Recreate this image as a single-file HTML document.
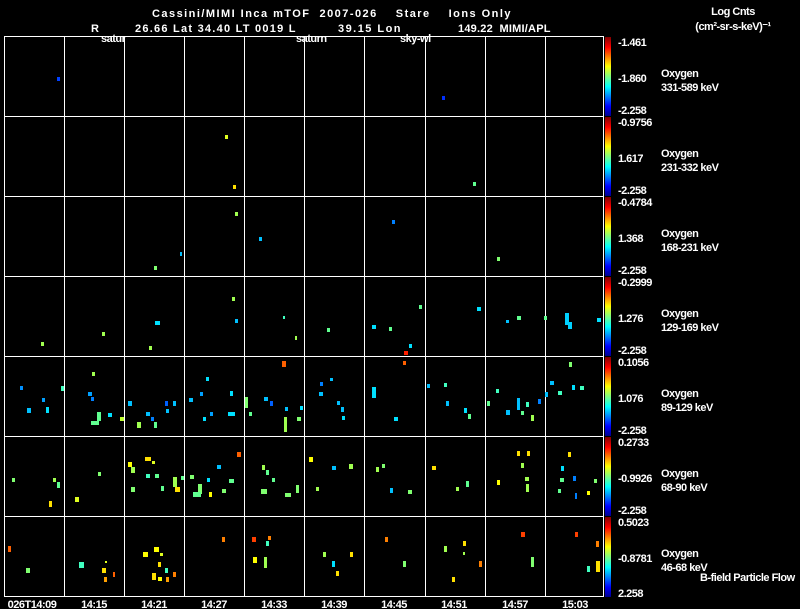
<!DOCTYPE html>
<html><head><meta charset="utf-8"><style>
body{margin:0;background:#000;width:800px;height:609px;overflow:hidden}
svg{display:block}
text{font-family:"Liberation Sans",sans-serif;fill:#fff;font-size:11px;font-weight:bold;letter-spacing:-0.5px;white-space:pre}
</style></head><body>
<svg width="800" height="609" viewBox="0 0 800 609">
<defs>
<linearGradient id="jet" x1="0" y1="1" x2="0" y2="0">
<stop offset="0" stop-color="#00008f"/><stop offset="0.12" stop-color="#0000ff"/><stop offset="0.37" stop-color="#00ffff"/><stop offset="0.5" stop-color="#80ff80"/><stop offset="0.63" stop-color="#ffff00"/><stop offset="0.87" stop-color="#ff0000"/><stop offset="1" stop-color="#800000"/>
</linearGradient>
</defs>
<text x="152" y="17" font-size="13.5" xml:space="preserve" textLength="358" lengthAdjust="spacing">Cassini/MIMI Inca mTOF  2007-026    Stare    Ions Only</text>
<text x="91" y="32" font-size="13.5">R</text>
<text x="135" y="32" font-size="13.5" textLength="160" lengthAdjust="spacing">26.66 Lat 34.40 LT 0019 L</text>
<text x="338" y="32" font-size="13.5" textLength="62" lengthAdjust="spacing">39.15 Lon</text>
<text x="458" y="32" font-size="13.5" xml:space="preserve" textLength="92" lengthAdjust="spacing">149.22  MIMI/APL</text>
<text x="101" y="42" font-size="12.5">satur</text>
<text x="296" y="42" font-size="12.5">saturn</text>
<text x="400" y="42" font-size="12.5">sky-wl</text>
<text x="733" y="15" text-anchor="middle">Log Cnts</text>
<text x="733" y="30" text-anchor="middle">(cm²-sr-s-keV)⁻¹</text>
<g fill="none" stroke="#fff" stroke-width="1">
<rect x="4.5" y="36.5" width="599" height="560"/>
<path d="M4 116.5H604M4 196.5H604M4 276.5H604M4 356.5H604M4 436.5H604M4 516.5H604"/>
<path d="M64.5 36V597M124.5 36V597M184.5 36V597M244.5 36V597M304.5 36V597M364.5 36V597M425.5 36V597M485.5 36V597M545.5 36V597"/>
</g>
<g fill="url(#jet)">
<rect x="605" y="37" width="6" height="79"/><rect x="605" y="117" width="6" height="79"/><rect x="605" y="197" width="6" height="79"/><rect x="605" y="277" width="6" height="79"/><rect x="605" y="357" width="6" height="79"/><rect x="605" y="437" width="6" height="79"/><rect x="605" y="517" width="6" height="80"/>
</g>
<g font-size="11">
<text x="618" y="46">-1.461</text><text x="618" y="82">-1.860</text><text x="618" y="114">-2.258</text>
<text x="618" y="126">-0.9756</text><text x="618" y="162">1.617</text><text x="618" y="194">-2.258</text>
<text x="618" y="206">-0.4784</text><text x="618" y="242">1.368</text><text x="618" y="274">-2.258</text>
<text x="618" y="286">-0.2999</text><text x="618" y="322">1.276</text><text x="618" y="354">-2.258</text>
<text x="618" y="366">0.1056</text><text x="618" y="402">1.076</text><text x="618" y="434">-2.258</text>
<text x="618" y="446">0.2733</text><text x="618" y="482">-0.9926</text><text x="618" y="514">-2.258</text>
<text x="618" y="526">0.5023</text><text x="618" y="562">-0.8781</text><text x="618" y="597">2.258</text>
<text x="661" y="77">Oxygen</text><text x="661" y="91">331-589 keV</text>
<text x="661" y="157">Oxygen</text><text x="661" y="171">231-332 keV</text>
<text x="661" y="237">Oxygen</text><text x="661" y="251">168-231 keV</text>
<text x="661" y="317">Oxygen</text><text x="661" y="331">129-169 keV</text>
<text x="661" y="397">Oxygen</text><text x="661" y="411">89-129 keV</text>
<text x="661" y="477">Oxygen</text><text x="661" y="491">68-90 keV</text>
<text x="661" y="557">Oxygen</text><text x="661" y="571">46-68 keV</text>
<text x="700" y="581" font-size="10">B-field Particle Flow</text>
</g>
<g font-size="11" text-anchor="middle">
<text x="32" y="608">026T14:09</text><text x="94" y="608">14:15</text><text x="154" y="608">14:21</text><text x="214" y="608">14:27</text><text x="274" y="608">14:33</text><text x="334" y="608">14:39</text><text x="394" y="608">14:45</text><text x="454" y="608">14:51</text><text x="515" y="608">14:57</text><text x="575" y="608">15:03</text>
</g>
<g>
<rect x="57" y="77" width="3" height="4" fill="#0040ff"/><rect x="442" y="96" width="3" height="4" fill="#0030ff"/>
<rect x="225" y="135" width="3" height="4" fill="#e0ff20"/><rect x="233" y="185" width="3" height="4" fill="#ffe000"/><rect x="473" y="182" width="3" height="4" fill="#60ff90"/>
<rect x="154" y="266" width="3" height="4" fill="#80ff70"/><rect x="259" y="237" width="3" height="4" fill="#00c0ff"/><rect x="235" y="212" width="3" height="4" fill="#a0ff50"/><rect x="392" y="220" width="3" height="4" fill="#0080ff"/><rect x="497" y="257" width="3" height="4" fill="#80ff70"/><rect x="180" y="252" width="2" height="4" fill="#00c0ff"/>
<rect x="41" y="342" width="3" height="4" fill="#a0ff50"/><rect x="102" y="332" width="3" height="4" fill="#a0ff50"/><rect x="149" y="346" width="3" height="4" fill="#a0ff50"/><rect x="155" y="321" width="5" height="4" fill="#00e0ff"/><rect x="232" y="297" width="3" height="4" fill="#a0ff50"/><rect x="235" y="319" width="3" height="4" fill="#00c0ff"/><rect x="283" y="316" width="2" height="3" fill="#40ffc0"/><rect x="295" y="336" width="2" height="4" fill="#a0ff50"/><rect x="327" y="328" width="3" height="4" fill="#60ff90"/><rect x="372" y="325" width="4" height="4" fill="#00e0ff"/><rect x="409" y="344" width="3" height="4" fill="#00e0ff"/><rect x="404" y="351" width="4" height="4" fill="#ff2000"/><rect x="389" y="327" width="3" height="4" fill="#60ff90"/><rect x="419" y="305" width="3" height="4" fill="#60ff90"/><rect x="477" y="307" width="4" height="4" fill="#00e0ff"/><rect x="517" y="316" width="4" height="4" fill="#60ff90"/><rect x="565" y="313" width="4" height="12" fill="#00d0ff"/><rect x="568" y="322" width="4" height="7" fill="#00d0ff"/><rect x="597" y="318" width="4" height="4" fill="#00e0ff"/><rect x="544" y="316" width="3" height="4" fill="#60ff90"/><rect x="506" y="320" width="3" height="3" fill="#00c0ff"/>
</g>
<g>
<rect x="20" y="386" width="3" height="4" fill="#0090ff"/><rect x="27" y="408" width="4" height="5" fill="#00c0ff"/><rect x="42" y="398" width="3" height="4" fill="#00a0ff"/><rect x="46" y="407" width="3" height="6" fill="#00e0ff"/><rect x="61" y="386" width="3" height="5" fill="#40ffc0"/>
<rect x="92" y="372" width="3" height="4" fill="#a0ff50"/><rect x="88" y="392" width="4" height="4" fill="#00a0ff"/><rect x="91" y="397" width="3" height="4" fill="#0080ff"/><rect x="97" y="412" width="4" height="9" fill="#60ff90"/><rect x="91" y="421" width="8" height="4" fill="#60ff90"/><rect x="108" y="413" width="4" height="4" fill="#00e0ff"/><rect x="120" y="417" width="4" height="4" fill="#c0ff30"/>
<rect x="128" y="401" width="4" height="5" fill="#00c0ff"/><rect x="146" y="412" width="4" height="4" fill="#00c0ff"/><rect x="151" y="417" width="3" height="4" fill="#0080ff"/><rect x="137" y="422" width="4" height="6" fill="#a0ff50"/><rect x="154" y="422" width="3" height="6" fill="#60ff90"/><rect x="165" y="401" width="3" height="5" fill="#0060ff"/><rect x="173" y="401" width="3" height="5" fill="#00c0ff"/><rect x="166" y="409" width="3" height="4" fill="#00c0ff"/>
<rect x="189" y="398" width="4" height="4" fill="#00c0ff"/><rect x="206" y="377" width="3" height="4" fill="#00e0ff"/><rect x="200" y="392" width="3" height="4" fill="#00a0ff"/><rect x="210" y="412" width="3" height="4" fill="#00a0ff"/><rect x="203" y="417" width="3" height="4" fill="#00e0ff"/><rect x="230" y="391" width="3" height="5" fill="#00e0ff"/><rect x="228" y="412" width="7" height="4" fill="#00e0ff"/>
<rect x="245" y="397" width="3" height="11" fill="#80ff70"/><rect x="249" y="412" width="3" height="4" fill="#60ff90"/><rect x="264" y="397" width="4" height="4" fill="#00c0ff"/><rect x="270" y="401" width="3" height="5" fill="#0060ff"/><rect x="285" y="407" width="3" height="4" fill="#00c0ff"/><rect x="284" y="417" width="3" height="15" fill="#a0ff50"/><rect x="297" y="417" width="4" height="4" fill="#80ff70"/><rect x="300" y="406" width="3" height="4" fill="#00e0ff"/><rect x="282" y="361" width="4" height="6" fill="#ff6000"/>
<rect x="320" y="382" width="3" height="4" fill="#0080ff"/><rect x="319" y="392" width="4" height="4" fill="#00c0ff"/><rect x="337" y="401" width="3" height="4" fill="#00c0ff"/><rect x="341" y="407" width="3" height="5" fill="#00c0ff"/><rect x="342" y="416" width="3" height="4" fill="#00e0ff"/><rect x="330" y="378" width="3" height="3" fill="#00c0ff"/>
<rect x="372" y="387" width="4" height="11" fill="#00e0ff"/><rect x="394" y="417" width="4" height="4" fill="#00e0ff"/><rect x="403" y="361" width="3" height="4" fill="#ff6000"/>
<rect x="427" y="384" width="3" height="4" fill="#00c0ff"/><rect x="444" y="383" width="3" height="4" fill="#40ffc0"/><rect x="446" y="401" width="3" height="5" fill="#00c0ff"/><rect x="464" y="408" width="3" height="5" fill="#00e0ff"/><rect x="468" y="414" width="3" height="5" fill="#60ff90"/>
<rect x="487" y="401" width="3" height="5" fill="#60ff90"/><rect x="496" y="389" width="3" height="4" fill="#40ffc0"/><rect x="506" y="410" width="4" height="5" fill="#00c0ff"/><rect x="517" y="398" width="3" height="12" fill="#00c0ff"/><rect x="521" y="411" width="3" height="4" fill="#60ff90"/><rect x="526" y="402" width="3" height="5" fill="#40ffc0"/><rect x="531" y="415" width="3" height="6" fill="#a0ff50"/><rect x="538" y="399" width="3" height="5" fill="#0080ff"/>
<rect x="545" y="392" width="3" height="5" fill="#00c0ff"/><rect x="550" y="381" width="4" height="4" fill="#00c0ff"/><rect x="558" y="391" width="4" height="4" fill="#40ffc0"/><rect x="569" y="362" width="3" height="5" fill="#80ff70"/><rect x="572" y="385" width="3" height="5" fill="#00e0ff"/><rect x="580" y="386" width="4" height="4" fill="#40ffc0"/>
</g>
<g>
<rect x="12" y="478" width="3" height="4" fill="#80ff70"/><rect x="53" y="478" width="3" height="4" fill="#a0ff50"/><rect x="57" y="482" width="3" height="6" fill="#60ff90"/><rect x="49" y="501" width="3" height="6" fill="#ffe000"/>
<rect x="98" y="472" width="3" height="4" fill="#80ff70"/><rect x="75" y="497" width="4" height="5" fill="#e0ff20"/>
<rect x="128" y="462" width="4" height="5" fill="#ffff00"/><rect x="131" y="467" width="4" height="6" fill="#a0ff50"/><rect x="145" y="457" width="6" height="4" fill="#ffe000"/><rect x="146" y="474" width="4" height="4" fill="#40ffc0"/><rect x="155" y="474" width="4" height="4" fill="#60ff90"/><rect x="131" y="487" width="4" height="5" fill="#80ff70"/><rect x="161" y="486" width="3" height="5" fill="#60ff90"/><rect x="173" y="477" width="4" height="10" fill="#a0ff50"/><rect x="175" y="487" width="5" height="5" fill="#ffe000"/><rect x="152" y="461" width="3" height="3" fill="#e0ff20"/><rect x="181" y="476" width="3" height="4" fill="#60ff90"/>
<rect x="190" y="475" width="4" height="4" fill="#80ff70"/><rect x="198" y="484" width="4" height="10" fill="#80ff70"/><rect x="193" y="492" width="8" height="5" fill="#60ff90"/><rect x="207" y="478" width="3" height="4" fill="#00e0ff"/><rect x="209" y="492" width="3" height="5" fill="#ffff00"/><rect x="217" y="465" width="4" height="4" fill="#00c0ff"/><rect x="222" y="489" width="4" height="4" fill="#80ff70"/><rect x="237" y="452" width="4" height="5" fill="#ff6000"/><rect x="229" y="479" width="5" height="4" fill="#60ff90"/>
<rect x="262" y="465" width="3" height="5" fill="#a0ff50"/><rect x="266" y="470" width="3" height="5" fill="#60ff90"/><rect x="272" y="478" width="3" height="4" fill="#60ff90"/><rect x="261" y="489" width="6" height="5" fill="#80ff70"/><rect x="285" y="493" width="6" height="4" fill="#80ff70"/><rect x="296" y="485" width="3" height="8" fill="#80ff70"/>
<rect x="309" y="457" width="4" height="5" fill="#ffff00"/><rect x="332" y="466" width="4" height="4" fill="#00c0ff"/><rect x="349" y="464" width="4" height="5" fill="#a0ff50"/><rect x="316" y="487" width="3" height="4" fill="#a0ff50"/>
<rect x="376" y="467" width="3" height="5" fill="#a0ff50"/><rect x="382" y="464" width="3" height="4" fill="#80ff70"/><rect x="390" y="488" width="3" height="5" fill="#00c0ff"/><rect x="408" y="490" width="4" height="4" fill="#80ff70"/>
<rect x="432" y="466" width="4" height="4" fill="#ffe000"/><rect x="456" y="487" width="3" height="4" fill="#a0ff50"/><rect x="466" y="481" width="3" height="6" fill="#60ff90"/>
<rect x="517" y="451" width="3" height="5" fill="#ffe000"/><rect x="527" y="451" width="3" height="5" fill="#ffe000"/><rect x="521" y="463" width="3" height="5" fill="#a0ff50"/><rect x="497" y="480" width="3" height="5" fill="#ffff00"/><rect x="525" y="477" width="4" height="4" fill="#a0ff50"/><rect x="526" y="484" width="3" height="8" fill="#a0ff50"/>
<rect x="568" y="452" width="3" height="5" fill="#ffe000"/><rect x="561" y="466" width="3" height="5" fill="#00e0ff"/><rect x="560" y="478" width="4" height="4" fill="#60ff90"/><rect x="573" y="476" width="3" height="5" fill="#0080ff"/><rect x="558" y="489" width="3" height="4" fill="#60ff90"/><rect x="575" y="493" width="2" height="6" fill="#0080ff"/><rect x="594" y="479" width="3" height="4" fill="#80ff70"/><rect x="587" y="491" width="3" height="4" fill="#ffff00"/>
</g>
<g>
<rect x="8" y="546" width="3" height="6" fill="#ff6000"/><rect x="26" y="568" width="4" height="5" fill="#80ff70"/>
<rect x="79" y="562" width="5" height="6" fill="#40ffc0"/><rect x="102" y="568" width="4" height="5" fill="#ffe000"/><rect x="104" y="577" width="3" height="5" fill="#ffa000"/><rect x="113" y="572" width="2" height="5" fill="#ff6000"/><rect x="105" y="561" width="2" height="2" fill="#e0ff20"/>
<rect x="143" y="552" width="5" height="5" fill="#ffff00"/><rect x="154" y="547" width="5" height="5" fill="#ffff00"/><rect x="160" y="553" width="3" height="3" fill="#e0ff20"/><rect x="158" y="562" width="3" height="5" fill="#ffe000"/><rect x="165" y="568" width="3" height="5" fill="#40ffc0"/><rect x="152" y="573" width="4" height="7" fill="#ffe000"/><rect x="158" y="577" width="4" height="4" fill="#ffff00"/><rect x="166" y="577" width="3" height="5" fill="#ffa000"/><rect x="173" y="572" width="3" height="5" fill="#ff8000"/>
<rect x="222" y="537" width="3" height="5" fill="#ff8000"/>
<rect x="252" y="537" width="4" height="5" fill="#ff4000"/><rect x="268" y="536" width="3" height="4" fill="#ff8000"/><rect x="266" y="541" width="3" height="5" fill="#40ffc0"/><rect x="253" y="557" width="4" height="6" fill="#ffff00"/><rect x="264" y="557" width="3" height="11" fill="#a0ff50"/>
<rect x="323" y="552" width="3" height="5" fill="#a0ff50"/><rect x="350" y="552" width="3" height="5" fill="#ffe000"/><rect x="332" y="561" width="3" height="6" fill="#00e0ff"/><rect x="336" y="571" width="3" height="5" fill="#ffe000"/>
<rect x="385" y="537" width="3" height="5" fill="#ff8000"/><rect x="403" y="561" width="3" height="6" fill="#80ff70"/>
<rect x="444" y="546" width="3" height="6" fill="#a0ff50"/><rect x="463" y="541" width="3" height="5" fill="#ffe000"/><rect x="463" y="552" width="2" height="3" fill="#a0ff50"/><rect x="479" y="561" width="3" height="6" fill="#ff8000"/><rect x="452" y="577" width="3" height="5" fill="#ffe000"/>
<rect x="521" y="532" width="4" height="5" fill="#ff4000"/><rect x="531" y="557" width="3" height="10" fill="#80ff70"/>
<rect x="575" y="532" width="3" height="5" fill="#ff4000"/><rect x="596" y="541" width="3" height="6" fill="#ff8000"/><rect x="587" y="566" width="3" height="6" fill="#40ffc0"/><rect x="596" y="561" width="4" height="11" fill="#ffe000"/>
</g>
</svg>
</body></html>
